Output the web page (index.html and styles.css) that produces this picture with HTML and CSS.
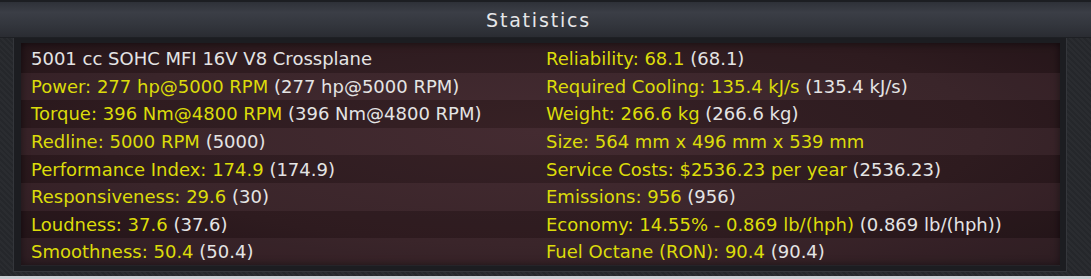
FILE: index.html
```html
<!DOCTYPE html>
<html>
<head>
<meta charset="utf-8">
<link rel="stylesheet" href="styles.css">
</head>
<body>
<div class="window">
  <div class="header"><span class="title">Statistics</span></div>
  <div class="frame">
    <div class="panel">
      <div class="row">
        <div class="cell"><span class="w">5001 cc SOHC MFI 16V V8 Crossplane</span></div>
        <div class="cell"><span class="y">Reliability: 68.1</span> <span class="w">(68.1)</span></div>
      </div>
      <div class="row">
        <div class="cell"><span class="y">Power: 277 hp@5000 RPM</span> <span class="w">(277 hp@5000 RPM)</span></div>
        <div class="cell"><span class="y">Required Cooling: 135.4 kJ/s</span> <span class="w">(135.4 kJ/s)</span></div>
      </div>
      <div class="row">
        <div class="cell"><span class="y">Torque: 396 Nm@4800 RPM</span> <span class="w">(396 Nm@4800 RPM)</span></div>
        <div class="cell"><span class="y">Weight: 266.6 kg</span> <span class="w">(266.6 kg)</span></div>
      </div>
      <div class="row">
        <div class="cell"><span class="y">Redline: 5000 RPM</span> <span class="w">(5000)</span></div>
        <div class="cell"><span class="y">Size: 564 mm x 496 mm x 539 mm</span></div>
      </div>
      <div class="row">
        <div class="cell"><span class="y">Performance Index: 174.9</span> <span class="w">(174.9)</span></div>
        <div class="cell"><span class="y">Service Costs: $2536.23 per year</span> <span class="w">(2536.23)</span></div>
      </div>
      <div class="row">
        <div class="cell"><span class="y">Responsiveness: 29.6</span> <span class="w">(30)</span></div>
        <div class="cell"><span class="y">Emissions: 956</span> <span class="w">(956)</span></div>
      </div>
      <div class="row">
        <div class="cell"><span class="y">Loudness: 37.6</span> <span class="w">(37.6)</span></div>
        <div class="cell"><span class="y">Economy: 14.55% - 0.869 lb/(hph)</span> <span class="w">(0.869 lb/(hph))</span></div>
      </div>
      <div class="row">
        <div class="cell"><span class="y">Smoothness: 50.4</span> <span class="w">(50.4)</span></div>
        <div class="cell"><span class="y">Fuel Octane (RON): 90.4</span> <span class="w">(90.4)</span></div>
      </div>
    </div>
  </div>
  <div class="footer"></div>
</div>
</body>
</html>
```
FILE: styles.css
```css
html, body {
  margin: 0;
  padding: 0;
  background: #26282c;
}
.window {
  width: 1091px;
  height: 279px;
  display: flex;
  flex-direction: column;
  background: repeating-linear-gradient(45deg, #25272b 0 2px, #2a2c30 2px 4px);
  font-family: "DejaVu Sans", sans-serif;
}
.header {
  height: 35px;
  border-top: 2px solid #1c1e22;
  background: linear-gradient(to bottom, #2e3138 0%, #3b3e46 30%, #33363d 65%, #2a2c32 100%);
  display: flex;
  align-items: center;
  justify-content: center;
  border-bottom: 1px solid #1e2024;
}
.title {
  color: #e6e6e8;
  font-size: 19px;
  letter-spacing: 1.8px;
  margin-left: -14px;
  margin-top: 1px;
}
.frame {
  margin: 0 24px 0 13px;
  padding: 5px 6px 6px 7px;
  background: #1c1d21;
  border: 1px solid #34363b;
  border-top: none;
  box-sizing: content-box;
}
.panel {
  height: 222px;
  box-sizing: border-box;
  background: radial-gradient(ellipse at 50% 40%, #3c2429 0%, #321e22 60%, #25151a 100%);
  box-shadow: inset 0 0 8px rgba(0,0,0,0.6);
  display: flex;
  flex-direction: column;
}
.row {
  height: 27.6px;
  flex: none;
  display: grid;
  grid-template-columns: 515px 1fr;
  align-items: center;
  padding-left: 10px;
  font-size: 18px;
  white-space: nowrap;
}
.row:first-child {
  padding-top: 2px;
}
.row:nth-child(even) {
  background: rgba(255, 220, 230, 0.045);
}
.row:nth-child(odd) {
  background: rgba(0, 0, 0, 0.08);
}
.y { color: #dcdc0a; }
.w { color: #e4e4e4; }
.footer {
  margin-top: auto;
  height: 3px;
  background: #c9cdd2;
}
```
